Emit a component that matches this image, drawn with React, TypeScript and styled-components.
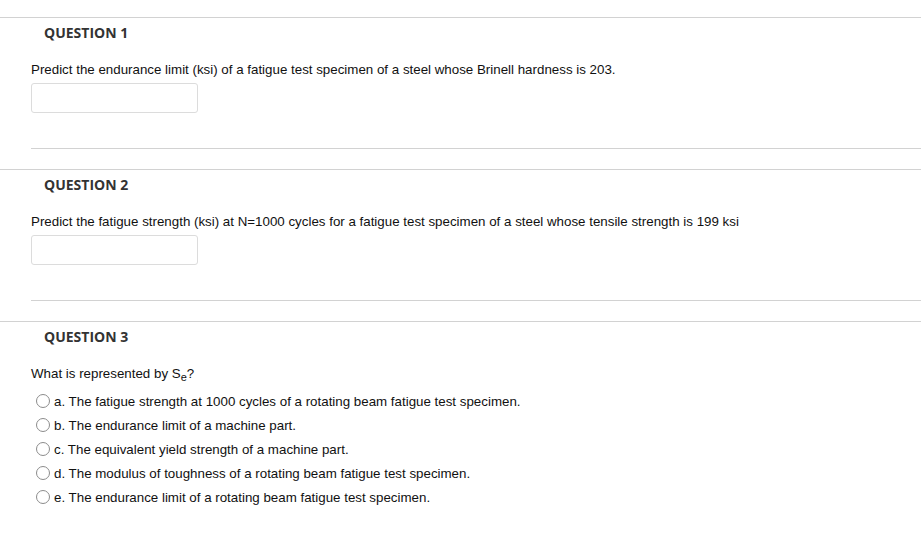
import React from 'react';
import styled, { createGlobalStyle } from 'styled-components';

const GlobalStyle = createGlobalStyle`
  body {
    margin: 0;
    background: #ffffff;
    font-family: 'Liberation Sans', Arial, sans-serif;
  }
`;

const Page = styled.div`
  padding-top: 17px;
`;

const Section = styled.section`
  border-top: 1px solid #d2d2d2;
  margin-bottom: 20px;
`;

const Heading = styled.h2`
  margin: 0;
  padding: 5px 0 0 44px;
  font-family: 'Open Sans', 'Noto Sans', sans-serif;
  font-size: 14px;
  font-weight: 700;
  line-height: 20px;
  color: #333333;
`;

const Body = styled.div`
  padding-left: 31px;
`;

const Prompt = styled.p`
  margin: 18px 0 0;
  font-size: 13.33px;
  line-height: 18px;
  color: #111111;
`;

const AnswerBox = styled.input`
  display: block;
  box-sizing: border-box;
  margin-top: 4px;
  width: 167px;
  height: 30px;
  border: 1px solid #dcdcdc;
  border-radius: 3px;
  background: #ffffff;
  outline: none;
`;

const Divider = styled.hr`
  margin: 35px 0 0;
  border: 0;
  border-top: 1px solid #d2d2d2;
`;

const Options = styled.ul`
  list-style: none;
  margin: 6px 0 0;
  padding: 0;
`;

const Option = styled.li`
  display: flex;
  align-items: center;
  height: 24px;
  font-size: 13.33px;
  color: #111111;
`;

const Radio = styled.span`
  box-sizing: border-box;
  width: 14px;
  height: 14px;
  margin: 0 4px 0 5px;
  border: 1px solid #8c8c8c;
  border-radius: 50%;
  background: #ffffff;
  flex-shrink: 0;
`;

const Sub = styled.sub`
  font-size: 11px;
  line-height: 0;
  vertical-align: -3px;
`;

const options = [
  'a. The fatigue strength at 1000 cycles of a rotating beam fatigue test specimen.',
  'b. The endurance limit of a machine part.',
  'c. The equivalent yield strength of a machine part.',
  'd. The modulus of toughness of a rotating beam fatigue test specimen.',
  'e. The endurance limit of a rotating beam fatigue test specimen.',
];

const App = () => {
  return (
    <Page>
      <GlobalStyle />
      <Section>
        <Heading>QUESTION 1</Heading>
        <Body>
          <Prompt>
            Predict the endurance limit (ksi) of a fatigue test specimen of a steel whose Brinell
            hardness is 203.
          </Prompt>
          <AnswerBox type="text" />
          <Divider />
        </Body>
      </Section>
      <Section>
        <Heading>QUESTION 2</Heading>
        <Body>
          <Prompt>
            Predict the fatigue strength (ksi) at N=1000 cycles for a fatigue test specimen of a steel
            whose tensile strength is 199 ksi
          </Prompt>
          <AnswerBox type="text" />
          <Divider />
        </Body>
      </Section>
      <Section>
        <Heading>QUESTION 3</Heading>
        <Body>
          <Prompt>
            What is represented by S<Sub>e</Sub>?
          </Prompt>
          <Options>
            {options.map((o) => (
              <Option key={o}>
                <Radio />
                {o}
              </Option>
            ))}
          </Options>
        </Body>
      </Section>
    </Page>
  );
};

export default App;
